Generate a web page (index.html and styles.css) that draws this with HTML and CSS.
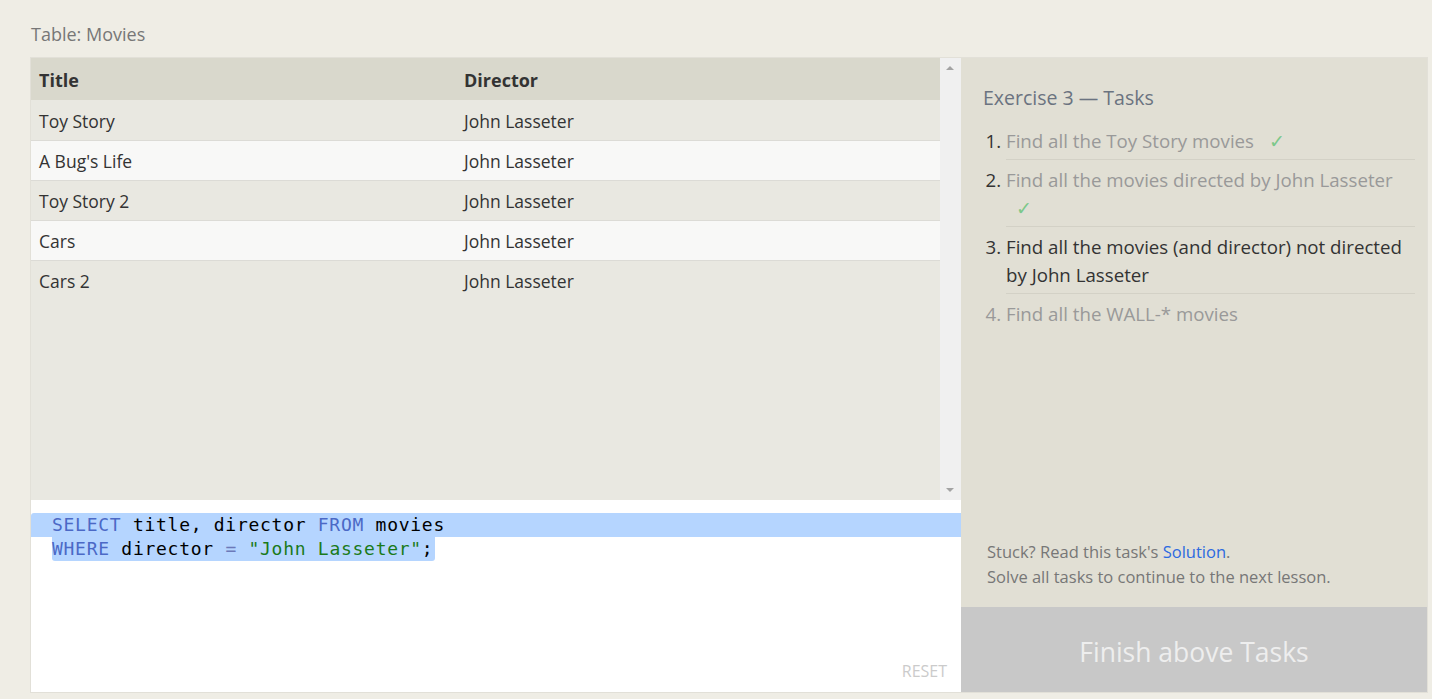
FILE: index.html
```html
<!DOCTYPE html>
<html>
<head>
<meta charset="utf-8">
<link rel="stylesheet" href="styles.css">
</head>
<body>
<div class="page">
  <div class="caption">Table: Movies</div>
  <div class="frame">
    <div class="left">
      <div class="results">
        <div class="table-wrap">
          <table class="grid">
            <thead>
              <tr><th class="c1">Title</th><th>Director</th></tr>
            </thead>
            <tbody>
              <tr><td>Toy Story</td><td>John Lasseter</td></tr>
              <tr><td>A Bug's Life</td><td>John Lasseter</td></tr>
              <tr><td>Toy Story 2</td><td>John Lasseter</td></tr>
              <tr><td>Cars</td><td>John Lasseter</td></tr>
              <tr><td>Cars 2</td><td>John Lasseter</td></tr>
            </tbody>
          </table>
        </div>
        <div class="scrollbar">
          <span class="arrow up"></span>
          <span class="arrow down"></span>
        </div>
      </div>
      <div class="editor">
        <div class="code">
          <div class="line full"><span class="kw">SELECT</span> title, director <span class="kw">FROM</span> movies</div>
          <div class="line"><span class="sel"><span class="kw">WHERE</span> director <span class="op">=</span> <span class="str">"John Lasseter"</span>;</span></div>
        </div>
        <div class="reset">RESET</div>
      </div>
    </div>
    <div class="right">
      <div class="tasks">
        <h2 class="title">Exercise 3 — Tasks</h2>
        <ol class="list">
          <li class="done"><span>Find all the Toy Story movies <span class="check">✓</span></span></li>
          <li class="done"><span>Find all the movies directed by John Lasseter <span class="check">✓</span></span></li>
          <li class="active"><span>Find all the movies (and director) not directed by John Lasseter</span></li>
          <li class="todo"><span>Find all the WALL-* movies</span></li>
        </ol>
        <div class="help">
          <div>Stuck? Read this task's <a class="link">Solution</a>.</div>
          <div>Solve all tasks to continue to the next lesson.</div>
        </div>
      </div>
      <div class="finish">Finish above Tasks</div>
    </div>
  </div>
</div>
</body>
</html>
```

FILE: styles.css
```css
html, body {
  margin: 0;
  padding: 0;
  background: #efede5;
  font-family: "Open Sans", "Noto Sans", sans-serif;
}
.page {
  padding: 21px 4px 6px 30px;
}
.caption {
  font-size: 18px;
  color: #777;
  line-height: 26px;
  padding-left: 1px;
  margin-bottom: 10px;
}
.frame {
  display: flex;
  border: 1px solid #e2e0d8;
  height: 634px;
}
.left {
  width: 930px;
  display: flex;
  flex-direction: column;
}
.results {
  height: 442px;
  display: flex;
  background: #e9e8e1;
}
.table-wrap {
  flex: 1;
}
.grid {
  width: 100%;
  border-collapse: collapse;
  font-size: 17.5px;
  color: #333;
}
.grid th {
  text-align: left;
  font-weight: 700;
  font-size: 18px;
  background: #d9d8cc;
  height: 42px;
  padding: 2px 8px 0;
  box-sizing: border-box;
  color: #333;
}
.grid th.c1 {
  width: 425px;
}
.grid td {
  height: 40px;
  padding: 2px 8px 0;
  box-sizing: border-box;
  border-bottom: 1px solid #dcdbd6;
}
.grid tbody tr:nth-child(odd) td {
  background: #e9e8e1;
}
.grid tbody tr:nth-child(even) td {
  background: #f8f8f7;
}
.grid tbody tr:last-child td {
  border-bottom: none;
}
.scrollbar {
  width: 21px;
  background: #f0f0f0;
  position: relative;
}
.arrow {
  position: absolute;
  left: 6px;
  width: 0;
  height: 0;
  border-left: 4px solid transparent;
  border-right: 4px solid transparent;
}
.arrow.up {
  top: 8px;
  border-bottom: 4px solid #a3a3a3;
}
.arrow.down {
  bottom: 8px;
  border-top: 4px solid #a3a3a3;
}
.editor {
  flex: 1;
  background: #fff;
  position: relative;
  padding-top: 13px;
}
.code {
  font-family: "DejaVu Sans Mono", "Liberation Mono", monospace;
  font-size: 18px;
  letter-spacing: 0.72px;
  line-height: 24px;
  color: #000;
}
.line {
  padding-left: 21px;
  white-space: pre;
}
.line.full {
  background: #b5d5ff;
  border-radius: 3px 0 0 0;
}
.sel {
  background: #b5d5ff;
  display: inline-block;
  padding-right: 2px;
  border-radius: 0 0 3px 3px;
}
.kw { color: #4b69c6; }
.op { color: #6c79b9; }
.str { color: #1a7a1a; }
.reset {
  position: absolute;
  right: 14px;
  bottom: 10px;
  font-size: 16px;
  color: #cbcbcb;
}
.right {
  flex: 1;
  display: flex;
  flex-direction: column;
}
.tasks {
  flex: 1;
  background: #e1dfd4;
  padding: 26px 12px 0 22px;
  display: flex;
  flex-direction: column;
}
.title {
  margin: 0;
  font-weight: 400;
  font-size: 19.5px;
  color: #6b7380;
  line-height: 28px;
}
.list {
  margin: 9px 0 0 0;
  padding-left: 23px;
  font-size: 18.7px;
  line-height: 28px;
}
.list li {
  padding: 6px 0 4px 0;
  border-bottom: 1px solid #d3d1c6;
}
.list li:last-child {
  border-bottom: none;
}
.list li::marker {
  color: #333;
}
.list li.done span { color: #999; }
.list li.active span { color: #333; }
.list li.todo, .list li.todo::marker { color: #999; }
.list li.todo span { color: #999; }
.list li.done .check {
  display: inline-block;
  color: #7cc88a;
  margin-left: 10px;
}
.help {
  margin-top: auto;
  padding: 0 0 18px 4px;
  font-size: 16.5px;
  line-height: 25px;
  color: #777;
}
.link {
  color: #2d6ae0;
}
.finish {
  height: 85px;
  box-sizing: border-box;
  padding-top: 4px;
  background: #c8c8c8;
  color: #eeeeee;
  font-size: 26.5px;
  display: flex;
  align-items: center;
  justify-content: center;
}
```
